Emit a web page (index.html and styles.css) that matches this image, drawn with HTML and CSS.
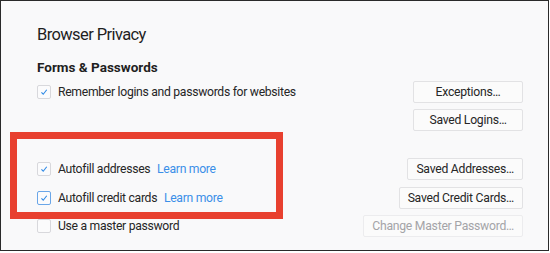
FILE: index.html
```html
<!DOCTYPE html>
<html>
<head>
<meta charset="utf-8">
<link rel="stylesheet" href="styles.css">
</head>
<body>
<div class="frame">
  <h1 class="title">Browser Privacy</h1>
  <h2 class="section">Forms &amp; Passwords</h2>
  <div class="rows">
    <div class="row r1">
      <label class="check"><span class="box on"><svg viewBox="0 0 14 14"><path d="M4 7.4 L6.1 9.6 L10.2 4.4" /></svg></span>Remember logins and passwords for websites</label>
      <button class="btn">Exceptions…</button>
    </div>
    <div class="row r2">
      <span></span>
      <button class="btn">Saved Logins…</button>
    </div>
    <div class="row r3">
      <label class="check"><span class="box on"><svg viewBox="0 0 14 14"><path d="M4 7.4 L6.1 9.6 L10.2 4.4" /></svg></span>Autofill addresses <a class="link">Learn more</a></label>
      <button class="btn">Saved Addresses…</button>
    </div>
    <div class="row r4">
      <label class="check"><span class="box on focus"><svg viewBox="0 0 14 14"><path d="M4 7.4 L6.1 9.6 L10.2 4.4" /></svg></span>Autofill credit cards <a class="link">Learn more</a></label>
      <button class="btn">Saved Credit Cards…</button>
    </div>
    <div class="row r5">
      <label class="check"><span class="box"></span>Use a master password</label>
      <button class="btn disabled">Change Master Password…</button>
    </div>
  </div>
  <div class="highlight"></div>
</div>
</body>
</html>
```
FILE: styles.css
```css
* { box-sizing: border-box; }
html, body { margin: 0; padding: 0; background: #ffffff; }
body { width: 550px; height: 253px; }
.frame {
  position: relative;
  width: 549px;
  height: 251px;
  border: 1px solid #2a2a2a;
  background: #f9f9fa;
  font-family: Roboto, "Liberation Sans", sans-serif;
  color: #262626;
  padding: 23px 25px 0 36px;
}
.title {
  margin: 0;
  font-size: 16.5px;
  font-weight: 400;
  letter-spacing: -0.6px;
  line-height: 22px;
  color: #1f1f1f;
}
.section {
  margin: 12px 0 0 0;
  font-size: 13.5px;
  font-weight: 700;
  line-height: 18px;
  color: #1f1f1f;
}
.rows { margin-top: 5px; display: flex; flex-direction: column; }
.row {
  display: flex;
  justify-content: space-between;
  align-items: center;
  height: 22px;
}
.r2 { margin-top: 6px; }
.r3 { margin-top: 27px; }
.r4 { margin-top: 7px; }
.r5 { margin-top: 6px; }
.check {
  display: flex;
  align-items: center;
  font-size: 12.2px;
  letter-spacing: -0.3px;
  color: #262626;
  white-space: pre;
}
.box {
  width: 14px;
  height: 14px;
  border: 1px solid #d8d8dc;
  border-radius: 2px;
  background: #fbfbfc;
  margin-right: 7px;
  display: flex;
}
.box.focus { border-color: #6aa6e8; }
.box svg { width: 12px; height: 12px; }
.box path { fill: none; stroke: #2f8ae6; stroke-width: 1.3; }
.link { color: #3b8fe8; margin-left: 4px; }
.btn {
  font-family: Roboto, "Liberation Sans", sans-serif;
  font-size: 12.2px;
  letter-spacing: -0.25px;
  color: #262626;
  background: #fbfbfb;
  border: 1px solid #e2e2e4;
  border-radius: 2px;
  height: 22px;
  padding: 0 8px;
  min-width: 110px;
}
.btn.disabled { color: #a4a4a8; border-color: #ececee; }
.highlight {
  position: absolute;
  left: 9px;
  top: 131px;
  width: 273px;
  height: 87px;
  border: 7px solid #e8402f;
}
```
